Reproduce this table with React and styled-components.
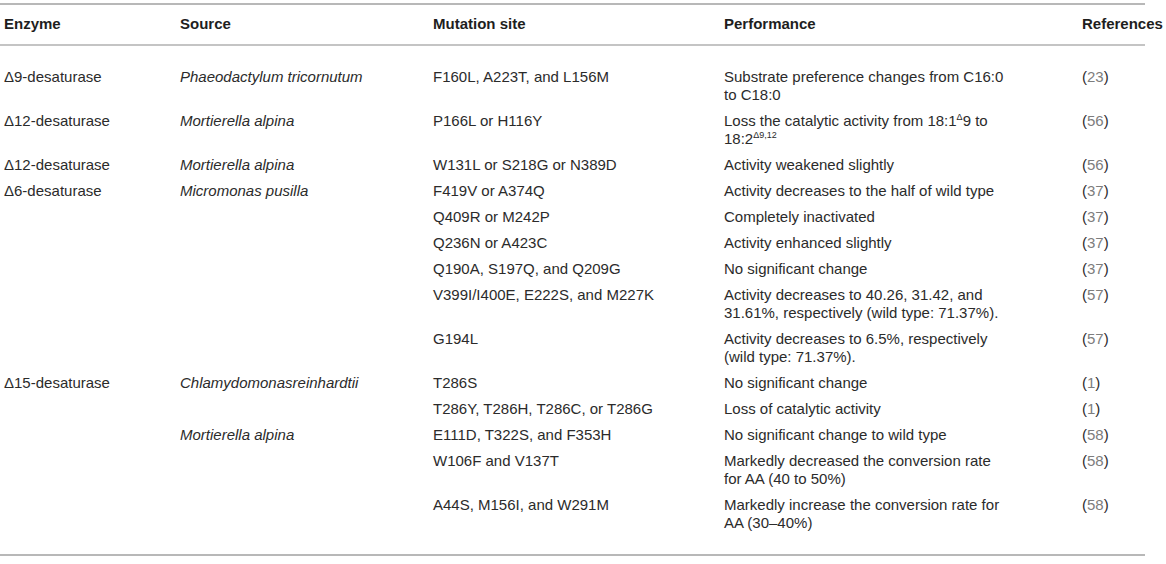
import React from 'react';
import styled, { createGlobalStyle } from 'styled-components';

const GlobalStyle = createGlobalStyle`
  body {
    margin: 0;
    background: #fff;
    font-family: "Liberation Sans", Arial, sans-serif;
    color: #2b2b2b;
  }
`;

const rows = [
  { enzyme: 'Δ9-desaturase', source: 'Phaeodactylum tricornutum', site: 'F160L, A223T, and L156M', perf: ['Substrate preference changes from C16:0', 'to C18:0'], refNo: '23' },
  { enzyme: 'Δ12-desaturase', source: 'Mortierella alpina', site: 'P166L or H116Y', perf: [<>Loss the catalytic activity from 18:1<sup>Δ</sup>9 to</>, <>18:2<sup>Δ9,12</sup></>], refNo: '56' },
  { enzyme: 'Δ12-desaturase', source: 'Mortierella alpina', site: 'W131L or S218G or N389D', perf: ['Activity weakened slightly'], refNo: '56' },
  { enzyme: 'Δ6-desaturase', source: 'Micromonas pusilla', site: 'F419V or A374Q', perf: ['Activity decreases to the half of wild type'], refNo: '37' },
  { site: 'Q409R or M242P', perf: ['Completely inactivated'], refNo: '37' },
  { site: 'Q236N or A423C', perf: ['Activity enhanced slightly'], refNo: '37' },
  { site: 'Q190A, S197Q, and Q209G', perf: ['No significant change'], refNo: '37' },
  { site: 'V399I/I400E, E222S, and M227K', perf: ['Activity decreases to 40.26, 31.42, and', '31.61%, respectively (wild type: 71.37%).'], refNo: '57' },
  { site: 'G194L', perf: ['Activity decreases to 6.5%, respectively', '(wild type: 71.37%).'], refNo: '57' },
  { enzyme: 'Δ15-desaturase', source: 'Chlamydomonasreinhardtii', site: 'T286S', perf: ['No significant change'], refNo: '1' },
  { site: 'T286Y, T286H, T286C, or T286G', perf: ['Loss of catalytic activity'], refNo: '1' },
  { source: 'Mortierella alpina', site: 'E111D, T322S, and F353H', perf: ['No significant change to wild type'], refNo: '58' },
  { site: 'W106F and V137T', perf: ['Markedly decreased the conversion rate', 'for AA (40 to 50%)'], refNo: '58' },
  { site: 'A44S, M156I, and W291M', perf: ['Markedly increase the conversion rate for', 'AA (30–40%)'], refNo: '58' },
];

const App = () => {
  return (
    <Page>
      <GlobalStyle />
      <Table>
        <colgroup>
          <col style={{ width: 176 }} />
          <col style={{ width: 253 }} />
          <col style={{ width: 291 }} />
          <col style={{ width: 358 }} />
          <col style={{ width: 67 }} />
        </colgroup>
        <thead>
          <tr>
            <HeadCell>Enzyme</HeadCell>
            <HeadCell>Source</HeadCell>
            <HeadCell>Mutation site</HeadCell>
            <HeadCell>Performance</HeadCell>
            <HeadCell>References</HeadCell>
          </tr>
        </thead>
        <tbody>
          {rows.map((row, index) => (
            <Row key={index}>
              <Cell>{row.enzyme}</Cell>
              <Cell $italic>{row.source}</Cell>
              <Cell>{row.site}</Cell>
              <Cell>
                {row.perf.map((line, i) => (
                  <React.Fragment key={i}>
                    {i > 0 && <br />}
                    {line}
                  </React.Fragment>
                ))}
              </Cell>
              <Cell>
                (<RefLink>{row.refNo}</RefLink>)
              </Cell>
            </Row>
          ))}
        </tbody>
      </Table>
    </Page>
  );
};

const Page = styled.div`
  padding-top: 3px;
  width: 1166px;
  overflow: hidden;
`;

const Table = styled.table`
  width: 1145px;
  table-layout: fixed;
  border-collapse: collapse;
  border-top: 2px solid #b8b8b8;
  border-bottom: 2px solid #b8b8b8;
  font-size: 15px;
  line-height: 18px;
  sup {
    font-size: 9px;
    line-height: 0;
    vertical-align: 6px;
  }
`;

const HeadCell = styled.th`
  text-align: left;
  font-weight: bold;
  color: #1e1e1e;
  padding: 10px 4px 11px;
  white-space: nowrap;
  overflow: visible;
  border-bottom: 2px solid #c4c4c4;
`;

const Row = styled.tr`
  &:first-child td {
    padding-top: 22px;
  }
  &:last-child td {
    padding-bottom: 22px;
  }
`;

const Cell = styled.td`
  vertical-align: top;
  text-align: left;
  padding: 4px 4px;
  white-space: nowrap;
  font-style: ${(p) => (p.$italic ? 'italic' : 'normal')};
`;

const RefLink = styled.span`
  color: #7d7d7d;
`;

export default App;
